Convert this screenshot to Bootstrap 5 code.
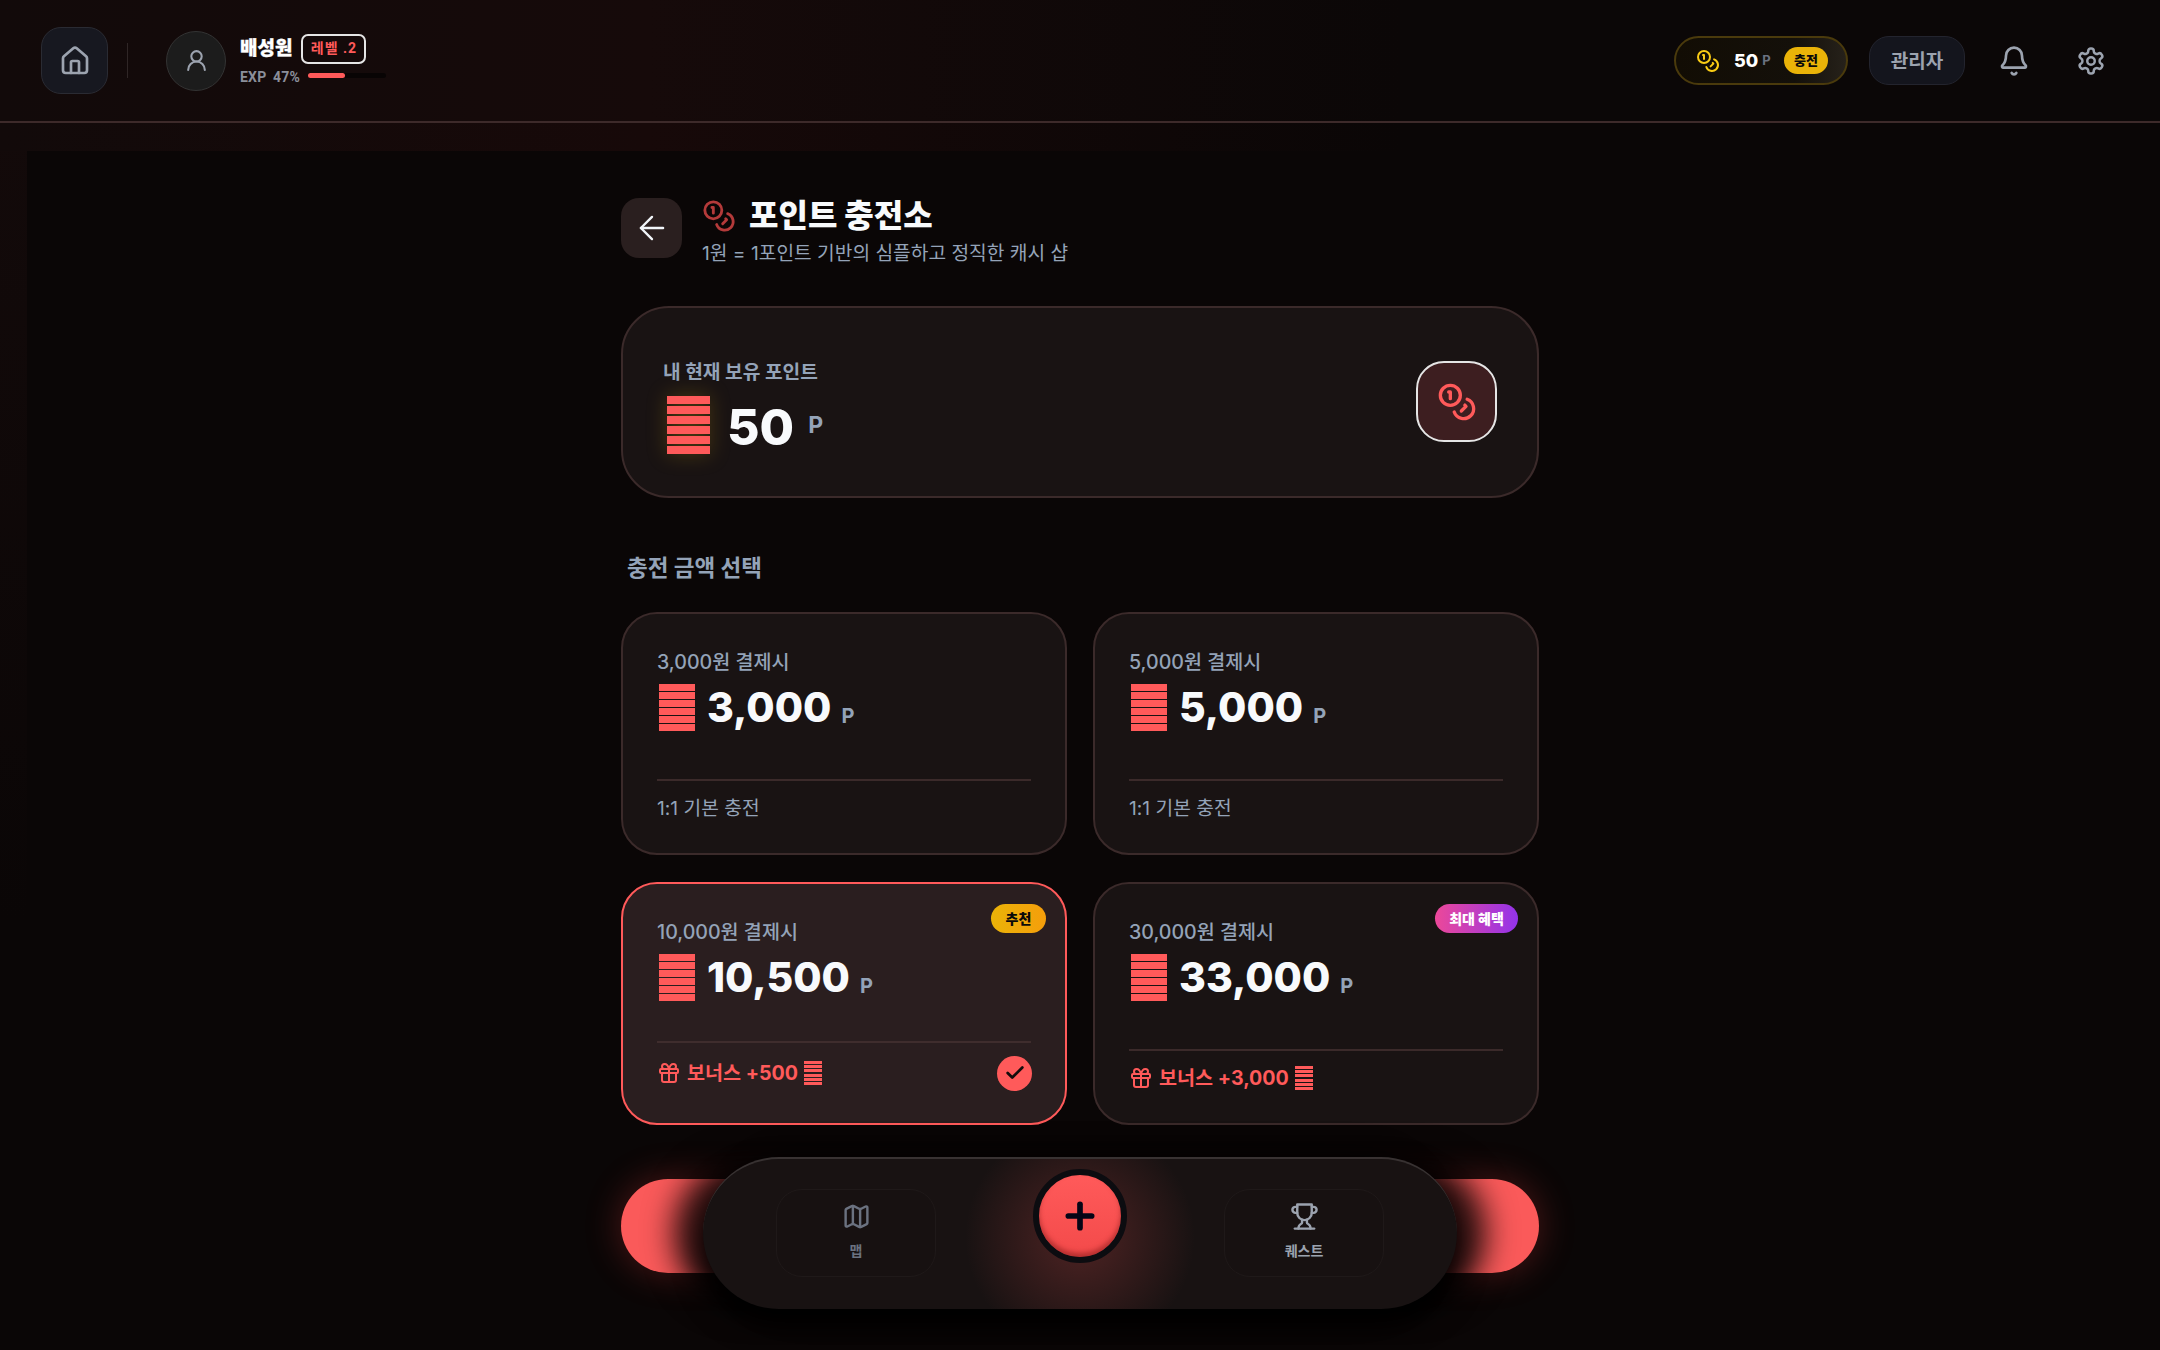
<!DOCTYPE html>
<html lang="ko">
<head>
  <meta charset="UTF-8">
  <title>포인트 충전소</title>
  <link href="https://cdn.jsdelivr.net/npm/bootstrap@5.3.2/dist/css/bootstrap.min.css" rel="stylesheet">
  <style>
    body{height:1350px;overflow:hidden;background:#0a0606;color:#f1f5f9;font-family:Inter,"Noto Sans CJK KR",sans-serif;position:relative}
    svg.ic{fill:none;stroke:currentColor;stroke-width:2;stroke-linecap:round;stroke-linejoin:round;flex:none}
    .bg-glow{position:absolute;inset:0;background:linear-gradient(90deg,#120a0a,#170909 30%,#0a0606 65%) 0 123px/100% 28px no-repeat,linear-gradient(180deg,#130a0a,#0a0606) 0 123px/27px 800px no-repeat}
    .top-bar{position:relative;height:123px;padding:0 54px 0 41px;border-bottom:2px solid #3d2a2a;background:linear-gradient(90deg,#120a0a,#160a0a 30%,#0b0707 65%)}
    .home-btn{width:67px;height:67px;border-radius:20px;background:#171820;border:1px solid #2a2b33;color:#9ca3af}
    .v-line{width:1px;height:35px;background:#2f2626;margin:0 38px 0 19px}
    .avatar{width:60px;height:60px;border-radius:50%;background:#1c1c1c;border:1px solid #333;color:#9ca3af;margin-right:14px}
    .user-name{font-size:19px;font-weight:800;line-height:28px;color:#fff;-webkit-text-stroke:.3px #fff}
    .level-tag{height:30px;width:65px;border:2px solid #e5e5e5;border-radius:7px;font-family:Roboto,"Noto Sans CJK KR",sans-serif;font-size:14px;font-weight:700;color:#ff5a5a;letter-spacing:1px;margin-left:9px}
    .exp-text{font-family:Roboto,"Noto Sans CJK KR",sans-serif;font-size:14px;font-weight:700;line-height:22px;padding-top:2px;color:#8b8f9a;letter-spacing:.2px;word-spacing:3px;width:62px;white-space:nowrap}
    .exp-track{width:78px;height:5px;border-radius:3px;background:#080404;margin-left:6px}
    .exp-fill{height:100%;border-radius:3px;background:#ff5a5a}
    .coin-pill{width:174px;height:49px;border-radius:25px;border:2px solid #4a3a0c;background:linear-gradient(90deg,#120d04,#14100a 70%,#26211a);padding:0 18px 0 20px;color:#facc15}
    .coin-num{font-size:18px;font-weight:800;color:#fff;margin-left:14px}
    .coin-unit{font-size:13px;font-weight:700;color:#6b7280;margin-left:4px}
    .charge-tag{width:44px;height:27px;border-radius:14px;background:#eab308;color:#0a0a0a;font-size:13px;font-weight:800;margin-left:auto}
    .admin-btn{width:96px;height:49px;border-radius:20px;background:#14151d;border:1px solid #23242e;color:#9ca3af;font-size:19px;font-weight:700;padding-top:3px;margin:0 33px 0 21px}
    .plain-ic{color:#9ca3af}
    .gear-ic{margin-left:46px}
    .page-wrap{position:relative;width:918px;margin:0 auto;padding-top:75px}
    .back-btn{width:61px;height:60px;border-radius:18px;background:#2a1f1f;color:#f1f5f9}
    .back-btn svg.ic{stroke-width:1.5}
    .title-text{font-size:32px;font-weight:800;line-height:44px;color:#f8fafc;margin-left:13px}
    .title-sub{font-size:19.2px;line-height:26px;color:#94a3b8;margin-top:2px}
    .title-col{margin-left:20px;margin-top:-4px}
    .panel{background:#191313;border:2px solid #3b2a2a}
    .balance-card{height:192px;border-radius:48px;margin-top:39.5px;padding:0 40px}
    .balance-left{align-self:flex-start;margin-top:51px}
    .balance-label{font-size:19.2px;font-weight:700;color:#94a3b8;line-height:26px}
    .balance-row{margin-top:10px;padding-left:4px}
    .balance-num{font-size:50px;font-weight:800;line-height:58px;margin:3px 0 0 17px;color:#f8fafc}
    .balance-unit{font-size:23px;font-weight:700;color:#94a3b8;margin-left:14px;margin-bottom:0}
    .bars{flex:none;display:block;shape-rendering:crispEdges}
    .glow-bars{filter:drop-shadow(0 0 10px rgba(234,179,8,.25))}
    .balance-icon{width:81px;height:81px;border-radius:28px;background:#3d1e20;border:2px solid #e5e5e5;color:#ff5a5a}
    .section-title{font-size:22.5px;font-weight:700;color:#94a3b8;line-height:32px;margin:54px 0 0 6px}
    .amount-grid{display:grid;grid-template-columns:446px 446px;gap:27px 26px;margin-top:28px}
    .amount-card{position:relative;height:243px;border-radius:36px;padding:34px 34px 0}
    .amount-card.picked{background:#2a1e1f;border-color:#ff5a5a}
    .pay-label{font-size:19.6px;line-height:28px;font-weight:500;color:#94a3b8}
    .amount-line{margin-top:8px;height:47px;padding-left:2px}
    .amount-num{font-size:41px;font-weight:800;line-height:47px;margin-left:12px;color:#f8fafc}
    .amount-unit{font-size:20px;font-weight:700;color:#94a3b8;margin:17px 0 0 10px}
    .card-foot{position:absolute;left:34px;right:34px;top:165px;border-top:2px solid #3b2a2a;padding-top:13px;font-size:19.2px;line-height:28px;color:#94a3b8}
    .picked .card-foot{top:157px;border-top-color:#3f2d2d;padding-top:13px}
    .bonus-text{color:#ff5a5a;font-weight:700;font-size:19.6px}
    .bonus-row{height:35px;gap:6px;color:#ff5a5a}
    .plain-foot .bonus-row{margin-top:-3px}
    .check-dot{width:35px;height:35px;border-radius:50%;background:#ff5a5a;color:#140c0c;margin:0 -1px 0 auto}
    .check-dot svg.ic{stroke-width:3}
    .tag-pill{position:absolute;top:20px;height:29px;border-radius:15px;font-size:14px;font-weight:800}
    .tag-pick{right:19px;width:55px;background:linear-gradient(90deg,#eab308,#f59e0b);color:#0a0a0a}
    .tag-best{right:19px;width:83px;background:linear-gradient(90deg,#ec4899,#9333ea);color:#fff}
    .pay-btn{height:94px;margin-top:54px;border-radius:47px;background:#fa5a5a;box-shadow:0 0 36px rgba(255,70,70,.28)}
    .dock{position:absolute;left:703px;top:1157px;width:754px;height:152px;border-radius:76px;background:radial-gradient(circle 115px at 50% 78px,rgba(255,90,90,.24),rgba(255,90,90,0)),#181212;border-top:2px solid #383232;box-shadow:-30px 0 30px rgba(0,0,0,.8),30px 0 30px rgba(0,0,0,.8),0 14px 30px #000;padding:30px 73px 0}
    .dock-tile{width:160px;height:88px;border-radius:26px;background:#171111;border:1px solid #1f1919;color:#6b7280;font-size:14px;font-weight:700;gap:11px;padding-top:12px;line-height:17px}
    .dock-tile.on{color:#9ca3af}
    .fab{position:absolute;left:50%;top:10px;width:94px;height:94px;margin-left:-47px;border-radius:50%;background:linear-gradient(180deg,#ff5a5a,#f34a4a);border:6px solid #0c0c10;box-shadow:inset 0 -4px 5px rgba(120,20,20,.5);color:#050516}
    .fab svg.ic{stroke-width:3.4}
  </style>
</head>
<body>

<svg width="0" height="0" class="position-absolute">
  <symbol id="i-coins" viewBox="0 0 24 24"><circle cx="8" cy="8" r="6"/><path d="M18.09 10.37A6 6 0 1 1 10.34 18"/><path d="M7 6h1v4"/><path d="m16.71 13.88.7.71-2.82 2.82"/></symbol>
  <symbol id="i-gift" viewBox="0 0 24 24"><rect x="3" y="8" width="18" height="4" rx="1"/><path d="M12 8v13"/><path d="M19 12v7a2 2 0 0 1-2 2H7a2 2 0 0 1-2-2v-7"/><path d="M7.5 8a2.5 2.5 0 0 1 0-5A4.8 8 0 0 1 12 8a4.8 8 0 0 1 4.5-5 2.5 2.5 0 0 1 0 5"/></symbol>
  <symbol id="i-bars" viewBox="0 0 36 47"><g fill="#ff5a5a"><rect width="36" height="7"/><rect y="8" width="36" height="7"/><rect y="16" width="36" height="7"/><rect y="24" width="36" height="7"/><rect y="32" width="36" height="7"/><rect y="40" width="36" height="7"/></g></symbol>
  <symbol id="i-bars-big" viewBox="0 0 43 58"><g fill="#ff5a5a"><rect width="43" height="8"/><rect y="10" width="43" height="8"/><rect y="20" width="43" height="8"/><rect y="30" width="43" height="8"/><rect y="40" width="43" height="8"/><rect y="50" width="43" height="8"/></g></symbol>
  <symbol id="i-bars-small" viewBox="0 0 18 24"><g fill="#ff5a5a"><rect width="18" height="3"/><rect y="4" width="18" height="3"/><rect y="8" width="18" height="3"/><rect y="13" width="18" height="3"/><rect y="17" width="18" height="3"/><rect y="21" width="18" height="3"/></g></symbol>
</svg>

<div class="bg-glow"></div>

<!-- 상단 바 -->
<header class="top-bar d-flex align-items-center">
  <div class="home-btn d-flex align-items-center justify-content-center">
    <svg class="ic" width="32" height="32" viewBox="0 0 24 24"><path d="M15 21v-8a1 1 0 0 0-1-1h-4a1 1 0 0 0-1 1v8"/><path d="M3 10a2 2 0 0 1 .709-1.528l7-5.999a2 2 0 0 1 2.582 0l7 5.999A2 2 0 0 1 21 10v9a2 2 0 0 1-2 2H5a2 2 0 0 1-2-2z"/></svg>
  </div>
  <div class="v-line"></div>
  <div class="avatar d-flex align-items-center justify-content-center">
    <svg class="ic" width="25" height="25" viewBox="0 0 24 24"><circle cx="12" cy="8" r="5"/><path d="M20 21a8 8 0 0 0-16 0"/></svg>
  </div>
  <div>
    <div class="d-flex align-items-center">
      <span class="user-name">배성원</span>
      <span class="level-tag d-flex align-items-center justify-content-center">레벨 .2</span>
    </div>
    <div class="d-flex align-items-center">
      <span class="exp-text">EXP 47%</span>
      <div class="exp-track"><div class="exp-fill" style="width:47%"></div></div>
    </div>
  </div>

  <div class="d-flex align-items-center ms-auto">
    <div class="coin-pill d-flex align-items-center">
      <svg class="ic" width="24" height="24"><use href="#i-coins"/></svg>
      <span class="coin-num">50</span><span class="coin-unit">P</span>
      <span class="charge-tag d-flex align-items-center justify-content-center">충전</span>
    </div>
    <div class="admin-btn d-flex align-items-center justify-content-center">관리자</div>
    <svg class="ic plain-ic" width="32" height="32" viewBox="0 0 24 24"><path d="M10.268 21a2 2 0 0 0 3.464 0"/><path d="M3.262 15.326A1 1 0 0 0 4 17h16a1 1 0 0 0 .74-1.673C19.41 13.956 18 12.499 18 8A6 6 0 0 0 6 8c0 4.499-1.411 5.956-2.738 7.326"/></svg>
    <svg class="ic plain-ic gear-ic" width="30" height="30" viewBox="0 0 24 24"><path d="M12.22 2h-.44a2 2 0 0 0-2 2v.18a2 2 0 0 1-1 1.73l-.43.25a2 2 0 0 1-2 0l-.15-.08a2 2 0 0 0-2.73.73l-.22.38a2 2 0 0 0 .73 2.73l.15.1a2 2 0 0 1 1 1.72v.51a2 2 0 0 1-1 1.74l-.15.09a2 2 0 0 0-.73 2.73l.22.38a2 2 0 0 0 2.73.73l.15-.08a2 2 0 0 1 2 0l.43.25a2 2 0 0 1 1 1.73V20a2 2 0 0 0 2 2h.44a2 2 0 0 0 2-2v-.18a2 2 0 0 1 1-1.73l.43-.25a2 2 0 0 1 2 0l.15.08a2 2 0 0 0 2.73-.73l.22-.39a2 2 0 0 0-.73-2.73l-.15-.08a2 2 0 0 1-1-1.74v-.5a2 2 0 0 1 1-1.74l.15-.09a2 2 0 0 0 .73-2.73l-.22-.38a2 2 0 0 0-2.73-.73l-.15.08a2 2 0 0 1-2 0l-.43-.25a2 2 0 0 1-1-1.73V4a2 2 0 0 0-2-2z"/><circle cx="12" cy="12" r="3"/></svg>
  </div>
</header>

<main class="page-wrap">
  <div class="d-flex">
    <div class="back-btn d-flex align-items-center justify-content-center">
      <svg class="ic" width="38" height="38" viewBox="0 0 24 24"><path d="m12 19-7-7 7-7"/><path d="M19 12H5"/></svg>
    </div>
    <div class="title-col">
      <div class="d-flex align-items-center">
        <svg class="ic" width="34" height="34" style="color:#b43a3a"><use href="#i-coins"/></svg>
        <span class="title-text">포인트 충전소</span>
      </div>
      <div class="title-sub">1원 = 1포인트 기반의 심플하고 정직한 캐시 샵</div>
    </div>
  </div>

  <div class="panel balance-card d-flex align-items-center justify-content-between">
    <div class="balance-left">
      <div class="balance-label">내 현재 보유 포인트</div>
      <div class="balance-row d-flex align-items-center">
        <svg class="bars glow-bars" width="43" height="58"><use href="#i-bars-big"/></svg>
        <span class="balance-num">50</span>
        <span class="balance-unit">P</span>
      </div>
    </div>
    <div class="balance-icon d-flex align-items-center justify-content-center">
      <svg class="ic" width="40" height="40"><use href="#i-coins"/></svg>
    </div>
  </div>

  <div class="section-title">충전 금액 선택</div>

  <div class="amount-grid">
    <div class="panel amount-card">
      <div class="pay-label">3,000원 결제시</div>
      <div class="amount-line d-flex align-items-center">
        <svg class="bars" width="36" height="47"><use href="#i-bars"/></svg>
        <span class="amount-num">3,000</span><span class="amount-unit">P</span>
      </div>
      <div class="card-foot">1:1 기본 충전</div>
    </div>
    <div class="panel amount-card">
      <div class="pay-label">5,000원 결제시</div>
      <div class="amount-line d-flex align-items-center">
        <svg class="bars" width="36" height="47"><use href="#i-bars"/></svg>
        <span class="amount-num">5,000</span><span class="amount-unit">P</span>
      </div>
      <div class="card-foot">1:1 기본 충전</div>
    </div>
    <div class="panel amount-card picked">
      <span class="tag-pill tag-pick d-flex align-items-center justify-content-center">추천</span>
      <div class="pay-label">10,000원 결제시</div>
      <div class="amount-line d-flex align-items-center">
        <svg class="bars" width="36" height="47"><use href="#i-bars"/></svg>
        <span class="amount-num">10,500</span><span class="amount-unit">P</span>
      </div>
      <div class="card-foot">
        <div class="bonus-row d-flex align-items-center">
          <svg class="ic" width="24" height="24"><use href="#i-gift"/></svg>
          <span class="bonus-text">보너스 +500</span>
          <svg class="bars" width="18" height="24"><use href="#i-bars-small"/></svg>
          <span class="check-dot d-flex align-items-center justify-content-center">
            <svg class="ic" width="22" height="22" viewBox="0 0 24 24"><path d="M20 6 9 17l-5-5"/></svg>
          </span>
        </div>
      </div>
    </div>
    <div class="panel amount-card">
      <span class="tag-pill tag-best d-flex align-items-center justify-content-center">최대 혜택</span>
      <div class="pay-label">30,000원 결제시</div>
      <div class="amount-line d-flex align-items-center">
        <svg class="bars" width="36" height="47"><use href="#i-bars"/></svg>
        <span class="amount-num">33,000</span><span class="amount-unit">P</span>
      </div>
      <div class="card-foot plain-foot">
        <div class="bonus-row d-flex align-items-center">
          <svg class="ic" width="24" height="24"><use href="#i-gift"/></svg>
          <span class="bonus-text">보너스 +3,000</span>
          <svg class="bars" width="18" height="24"><use href="#i-bars-small"/></svg>
        </div>
      </div>
    </div>
  </div>

  <div class="pay-btn"></div>
</main>

<!-- 하단 독 -->
<nav class="dock d-flex justify-content-between">
  <div class="dock-tile d-flex flex-column align-items-center">
    <svg class="ic" width="29" height="29" viewBox="0 0 24 24"><path d="M14.106 5.553a2 2 0 0 0 1.788 0l3.659-1.83A1 1 0 0 1 21 4.619v12.764a1 1 0 0 1-.553.894l-4.553 2.277a2 2 0 0 1-1.788 0l-4.212-2.106a2 2 0 0 0-1.788 0l-3.659 1.83A1 1 0 0 1 3 19.381V6.618a1 1 0 0 1 .553-.894l4.553-2.277a2 2 0 0 1 1.788 0z"/><path d="M15 5.764v15"/><path d="M9 3.236v15"/></svg>
    <span>맵</span>
  </div>
  <div class="fab d-flex align-items-center justify-content-center">
    <svg class="ic" width="40" height="40" viewBox="0 0 24 24"><path d="M5 12h14"/><path d="M12 5v14"/></svg>
  </div>
  <div class="dock-tile on d-flex flex-column align-items-center">
    <svg class="ic" width="29" height="29" viewBox="0 0 24 24"><path d="M6 9H4.5a2.5 2.5 0 0 1 0-5H6"/><path d="M18 9h1.5a2.5 2.5 0 0 0 0-5H18"/><path d="M4 22h16"/><path d="M10 14.66V17c0 .55-.47.98-.97 1.21C7.85 18.75 7 20.24 7 22"/><path d="M14 14.66V17c0 .55.47.98.97 1.21C16.15 18.75 17 20.24 17 22"/><path d="M18 2H6v7a6 6 0 0 0 12 0V2Z"/></svg>
    <span>퀘스트</span>
  </div>
</nav>

<script src="https://cdn.jsdelivr.net/npm/bootstrap@5.3.2/dist/js/bootstrap.bundle.min.js"></script>
</body>
</html>
